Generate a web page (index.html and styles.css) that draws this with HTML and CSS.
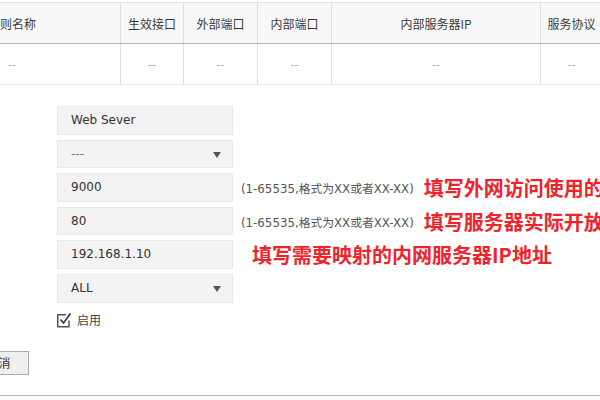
FILE: index.html
```html
<!DOCTYPE html>
<html lang="zh-CN">
<head>
<meta charset="utf-8">
<title>虚拟服务器</title>
<link rel="stylesheet" href="styles.css">
</head>
<body>
<div class="page">
  <table class="rules">
    <colgroup>
      <col class="c-name"><col class="c-if"><col class="c-ext"><col class="c-int"><col class="c-ip"><col class="c-proto">
    </colgroup>
    <thead>
      <tr><th>规则名称</th><th>生效接口</th><th>外部端口</th><th>内部端口</th><th>内部服务器IP</th><th>服务协议</th></tr>
    </thead>
    <tbody>
      <tr><td>--</td><td>--</td><td>--</td><td>--</td><td>--</td><td>--</td></tr>
    </tbody>
  </table>

  <div class="form">
    <div class="row"><div class="field">Web Sever</div></div>
    <div class="row"><div class="field select muted">---</div></div>
    <div class="row"><div class="field">9000</div><span class="hint">(1-65535,格式为XX或者XX-XX)</span><span class="note">填写外网访问使用的端口</span></div>
    <div class="row"><div class="field">80</div><span class="hint">(1-65535,格式为XX或者XX-XX)</span><span class="note">填写服务器实际开放的端口</span></div>
    <div class="row"><div class="field">192.168.1.10</div><span class="note note-near">填写需要映射的内网服务器IP地址</span></div>
    <div class="row"><div class="field select">ALL</div></div>
    <label class="check-row">
      <svg class="checkbox" width="15" height="16" viewBox="0 0 15 16">
        <path d="M12 8.5 V14.75 H0.75 V2.75 H9" fill="none" stroke="#555" stroke-width="1.5"/>
        <path d="M3.5 7.5 L6.5 11 L13.5 1.5" fill="none" stroke="#333" stroke-width="1.6"/>
      </svg>
      <span class="check-label">启用</span>
    </label>
  </div>

  <div class="actions"><button class="btn" type="button">取消</button></div>
  <div class="divider"></div>
</div>
</body>
</html>
```

FILE: styles.css
```css
html, body {
  margin: 0;
  padding: 0;
  background: #fff;
}
body {
  width: 600px;
  height: 400px;
  overflow: hidden;
  font-family: "DejaVu Sans", "Noto Sans CJK SC", sans-serif;
  font-size: 12px;
  color: #333;
}
.page {
  padding-top: 2px;
}
.rules {
  table-layout: fixed;
  border-collapse: collapse;
  width: 699px;
  margin-left: -97px;
  border-top: 1px solid #e3e3e3;
}
.c-name { width: 217px; }
.c-if { width: 63px; }
.c-ext { width: 74px; }
.c-int { width: 74px; }
.c-ip { width: 209px; }
.c-proto { width: 62px; }
.rules th, .rules td {
  border-left: 1px solid #dedede;
  border-right: 1px solid #dedede;
  text-align: center;
  padding: 0;
  white-space: nowrap;
  overflow: hidden;
}
.rules th {
  height: 40px;
  background: #f8f8f8;
  font-family: "Noto Sans CJK SC", sans-serif;
  font-weight: normal;
  font-size: 12px;
  color: #3a3a3a;
  border-bottom: 1px solid #a9b8c9;
}
.rules td {
  height: 40px;
  color: #aaa;
  font-size: 11px;
  border-bottom: 1px solid #e6e6e6;
}
.form {
  padding-left: 57px;
  margin-top: 21px;
}
.row {
  display: flex;
  align-items: center;
  height: 28.6px;
  margin-bottom: 5px;
  white-space: nowrap;
}
.field {
  box-sizing: border-box;
  width: 176px;
  height: 28.6px;
  line-height: 26.6px;
  padding-left: 13px;
  background: #f3f3f3;
  border: 1px solid #e8e8e8;
  color: #333;
  position: relative;
  flex: none;
}
.field.muted { color: #777; }
.select::after {
  content: "";
  position: absolute;
  right: 11px;
  top: 11px;
  border-left: 4.5px solid transparent;
  border-right: 4.5px solid transparent;
  border-top: 6px solid #555;
}
.hint {
  margin-left: 8px;
  color: #555;
  font-size: 11.8px;
}
.note {
  margin-left: 10px;
  color: #f0232b;
  font-family: "Noto Sans CJK SC", sans-serif;
  font-weight: bold;
  font-size: 20px;
}
.note-near {
  margin-left: 19px;
}
.check-row {
  display: flex;
  align-items: center;
  margin-top: 9px;
  height: 16px;
}
.checkbox {
  flex: none;
  display: block;
}
.check-label {
  margin-left: 5px;
  font-family: "Noto Sans CJK SC", sans-serif;
  color: #444;
}
.actions {
  margin-top: 23px;
  margin-left: -32px;
}
.btn {
  box-sizing: border-box;
  width: 61px;
  height: 24px;
  background: #efefef;
  border: 1px solid #aaa;
  border-radius: 0;
  font-family: "Noto Sans CJK SC", sans-serif;
  font-size: 12px;
  color: #333;
  padding: 0;
}
.divider {
  margin-top: 20px;
  height: 1px;
  background: #a9b8c9;
}
```
